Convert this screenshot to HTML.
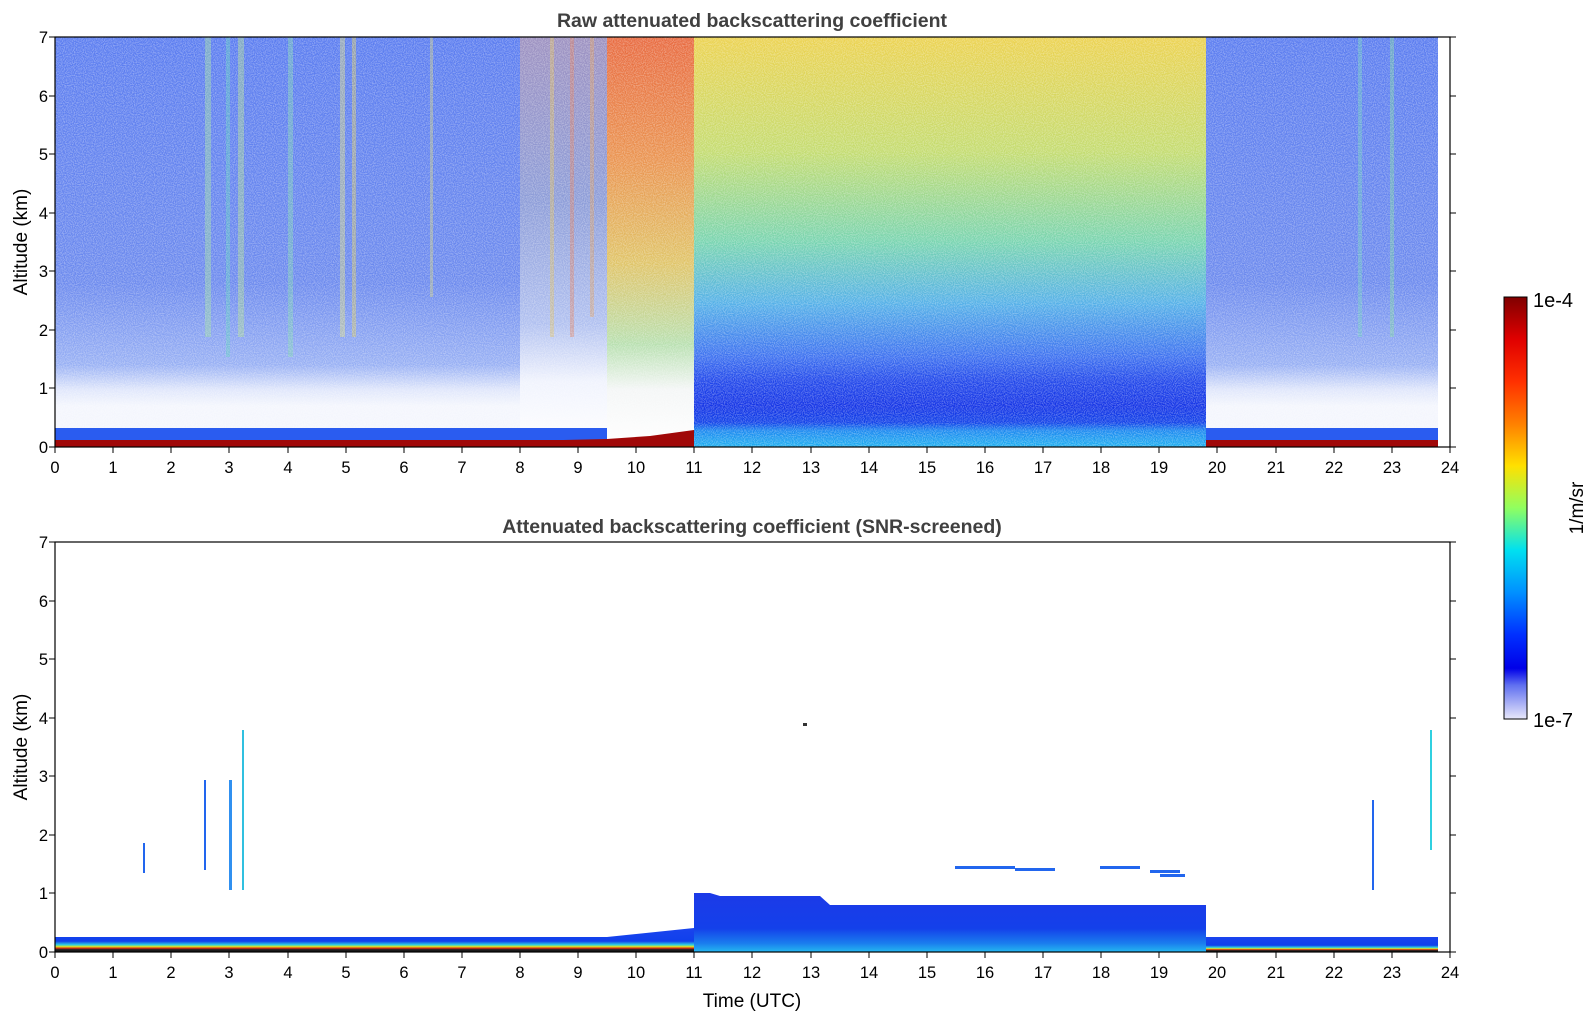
<!DOCTYPE html>
<html><head><meta charset="utf-8"><style>
html,body{margin:0;padding:0;background:#fff;}
svg{display:block;font-family:"Liberation Sans","DejaVu Sans",sans-serif;}
</style></head><body>
<svg width="1595" height="1020" viewBox="0 0 1595 1020" xmlns="http://www.w3.org/2000/svg">
<defs>
<linearGradient id="gA" x1="0" y1="0" x2="0" y2="1">
<stop offset="0" stop-color="#5a7cf0"/><stop offset="0.6" stop-color="#6c8aee"/><stop offset="0.8" stop-color="#98b0f4"/><stop offset="0.86" stop-color="#dfe6fb"/><stop offset="0.9" stop-color="#f4f6fd"/><stop offset="1" stop-color="#f4f6fd"/>
</linearGradient>
<linearGradient id="gA2" x1="0" y1="0" x2="0" y2="1">
<stop offset="0" stop-color="#9c90c0"/><stop offset="0.4" stop-color="#8c9cd8"/><stop offset="0.7" stop-color="#b0c0f0"/><stop offset="0.84" stop-color="#f0f3fd"/><stop offset="1" stop-color="#ffffff"/>
</linearGradient>
<linearGradient id="gB" x1="0" y1="0" x2="0" y2="1">
<stop offset="0" stop-color="#e86a40"/><stop offset="0.3" stop-color="#ea9450"/><stop offset="0.55" stop-color="#e0c468"/><stop offset="0.75" stop-color="#b8e0b0"/><stop offset="0.86" stop-color="#f4f6f6"/><stop offset="1" stop-color="#ffffff"/>
</linearGradient>
<linearGradient id="gC" x1="0" y1="0" x2="0" y2="1">
<stop offset="0" stop-color="#ecd250"/><stop offset="0.28" stop-color="#c4dc70"/><stop offset="0.5" stop-color="#78d4b0"/><stop offset="0.65" stop-color="#54b0e8"/><stop offset="0.78" stop-color="#3c70f0"/><stop offset="0.84" stop-color="#2046ea"/><stop offset="0.9" stop-color="#1434e6"/><stop offset="0.94" stop-color="#1040e8"/><stop offset="0.96" stop-color="#1a88f0"/><stop offset="1" stop-color="#20b0f0"/>
</linearGradient>
<linearGradient id="gBl" x1="0" y1="0" x2="0" y2="1">
<stop offset="0" stop-color="#1a44ee"/><stop offset="0.55" stop-color="#1040ec"/><stop offset="0.7" stop-color="#30d0e0"/><stop offset="0.78" stop-color="#e0e020"/><stop offset="0.84" stop-color="#e03010"/><stop offset="0.9" stop-color="#202020"/><stop offset="1" stop-color="#101010"/>
</linearGradient>
<linearGradient id="gCb" x1="0" y1="0" x2="0" y2="1">
<stop offset="0" stop-color="#1c3ae8"/><stop offset="0.6" stop-color="#1440ea"/><stop offset="0.85" stop-color="#1a7cee"/><stop offset="1" stop-color="#24b8f0"/>
</linearGradient>
<linearGradient id="cb" x1="0" y1="0" x2="0" y2="1">
<stop offset="0" stop-color="#800000"/><stop offset="0.1" stop-color="#e00000"/><stop offset="0.2" stop-color="#ff3000"/><stop offset="0.3" stop-color="#ff8000"/><stop offset="0.4" stop-color="#ffe000"/><stop offset="0.5" stop-color="#90ff60"/><stop offset="0.6" stop-color="#00e0f0"/><stop offset="0.7" stop-color="#0090ff"/><stop offset="0.8" stop-color="#0030ff"/><stop offset="0.88" stop-color="#0000e8"/><stop offset="0.92" stop-color="#6070f0"/><stop offset="1" stop-color="#e8e8fa"/>
</linearGradient>
<filter id="spk" x="0" y="0" width="100%" height="100%">
<feTurbulence type="fractalNoise" baseFrequency="0.9" numOctaves="1" seed="3" result="n"/>
<feColorMatrix type="matrix" values="0 0 0 0 1  0 0 0 0 1  0 0 0 0 1  0 0 0 -3 1.9"/>
</filter>
</defs>

<rect x="55" y="37" width="465" height="410" fill="url(#gA)"/>
<rect x="520" y="37" width="87" height="410" fill="url(#gA2)"/>
<rect x="607" y="37" width="87" height="410" fill="url(#gB)"/>
<rect x="694" y="37" width="512" height="410" fill="url(#gC)"/>
<rect x="1206" y="37" width="232" height="410" fill="url(#gA)"/>
<rect x="1438" y="37" width="12" height="410" fill="#fff"/>
<g opacity="0.45">
<rect x="205" y="37" width="6" height="300" fill="#a0e0a0"/>
<rect x="226" y="37" width="4" height="320" fill="#60d0c0"/>
<rect x="238" y="37" width="6" height="300" fill="#b0e090"/>
<rect x="288" y="37" width="5" height="320" fill="#80d8b0"/>
<rect x="340" y="37" width="5" height="300" fill="#e0e080"/>
<rect x="352" y="37" width="4" height="300" fill="#e0d060"/>
<rect x="430" y="37" width="3" height="260" fill="#d0d080"/>
<rect x="550" y="37" width="4" height="300" fill="#e0c060"/>
<rect x="570" y="37" width="4" height="300" fill="#e08060"/>
<rect x="590" y="37" width="4" height="280" fill="#e0a060"/>
<rect x="1358" y="37" width="4" height="300" fill="#70d0c0"/>
<rect x="1390" y="37" width="4" height="300" fill="#80d8a0"/>
</g>
<rect x="55" y="37" width="1395" height="410" filter="url(#spk)" opacity="0.3"/>
<rect x="55" y="428" width="552" height="12" fill="#2a5cf0"/>
<rect x="55" y="440" width="552" height="7" fill="#a00808"/>
<path d="M520 441 L607 439 L650 436 L694 430 L694 447 L520 447Z" fill="#a00808"/>
<rect x="1206" y="428" width="232" height="12" fill="#2a5cf0"/>
<rect x="1206" y="440" width="232" height="7" fill="#a00808"/>

<path d="M55 937 L607 937 L694 928 L694 952 L55 952Z" fill="url(#gBl)"/>
<rect x="1206" y="937" width="232" height="15" fill="url(#gBl)"/>
<path d="M694 893 L710 893 L720 896 L820 896 L830 905 L1206 905 L1206 952 L694 952Z" fill="url(#gCb)"/>
<g fill="#2266ee">
<rect x="955" y="866" width="60" height="3"/>
<rect x="1015" y="868" width="40" height="3"/>
<rect x="1100" y="866" width="40" height="3"/>
<rect x="1150" y="870" width="30" height="3"/>
<rect x="1160" y="874" width="25" height="3"/>
<rect x="143" y="843" width="2" height="30"/>
<rect x="204" y="780" width="2" height="90"/>
<rect x="229" y="780" width="3" height="110" fill="#3090f0"/>
<rect x="242" y="730" width="2" height="160" fill="#30c0e0"/>
<rect x="1372" y="800" width="2" height="90"/>
<rect x="1430" y="730" width="2" height="120" fill="#30d0e0"/>
</g>
<rect x="803" y="723" width="4" height="3" fill="#333"/>

<rect x="55" y="37" width="1395" height="410" fill="none" stroke="#000" stroke-width="1.2"/>
<rect x="55" y="542" width="1395" height="410" fill="none" stroke="#000" stroke-width="1.2"/>

<g stroke="#000" stroke-width="1">
<path d="M55 447v6M113 447v6M171 447v6M229 447v6M288 447v6M346 447v6M404 447v6M462 447v6M520 447v6M578 447v6M636 447v6M694 447v6M752 447v6M811 447v6M869 447v6M927 447v6M985 447v6M1043 447v6M1101 447v6M1159 447v6M1217 447v6M1276 447v6M1334 447v6M1392 447v6M1450 447v6"/>
<path d="M55 952v6M113 952v6M171 952v6M229 952v6M288 952v6M346 952v6M404 952v6M462 952v6M520 952v6M578 952v6M636 952v6M694 952v6M752 952v6M811 952v6M869 952v6M927 952v6M985 952v6M1043 952v6M1101 952v6M1159 952v6M1217 952v6M1276 952v6M1334 952v6M1392 952v6M1450 952v6"/>
<path d="M49 447h6M49 388h6M49 330h6M49 271h6M49 213h6M49 154h6M49 96h6M49 37h6"/>
<path d="M49 952h6M49 893h6M49 835h6M49 776h6M49 718h6M49 659h6M49 601h6M49 542h6"/>
<path d="M1450 447h6M1450 388h6M1450 330h6M1450 271h6M1450 213h6M1450 154h6M1450 96h6M1450 37h6"/>
<path d="M1450 952h6M1450 893h6M1450 835h6M1450 776h6M1450 718h6M1450 659h6M1450 601h6M1450 542h6"/>
</g>

<g font-size="16.5" fill="#000" text-anchor="middle">
<g transform="translate(0,473)">
<text x="55">0</text><text x="113">1</text><text x="171">2</text><text x="229">3</text><text x="288">4</text><text x="346">5</text><text x="404">6</text><text x="462">7</text><text x="520">8</text><text x="578">9</text><text x="636">10</text><text x="694">11</text><text x="752">12</text><text x="811">13</text><text x="869">14</text><text x="927">15</text><text x="985">16</text><text x="1043">17</text><text x="1101">18</text><text x="1159">19</text><text x="1217">20</text><text x="1276">21</text><text x="1334">22</text><text x="1392">23</text><text x="1450">24</text>
</g>
<g transform="translate(0,978)">
<text x="55">0</text><text x="113">1</text><text x="171">2</text><text x="229">3</text><text x="288">4</text><text x="346">5</text><text x="404">6</text><text x="462">7</text><text x="520">8</text><text x="578">9</text><text x="636">10</text><text x="694">11</text><text x="752">12</text><text x="811">13</text><text x="869">14</text><text x="927">15</text><text x="985">16</text><text x="1043">17</text><text x="1101">18</text><text x="1159">19</text><text x="1217">20</text><text x="1276">21</text><text x="1334">22</text><text x="1392">23</text><text x="1450">24</text>
</g>
</g>
<g font-size="16.5" fill="#000" text-anchor="end">
<text x="48" y="453">0</text><text x="48" y="394">1</text><text x="48" y="336">2</text><text x="48" y="277">3</text><text x="48" y="219">4</text><text x="48" y="160">5</text><text x="48" y="102">6</text><text x="48" y="43">7</text>
<text x="48" y="958">0</text><text x="48" y="899">1</text><text x="48" y="841">2</text><text x="48" y="782">3</text><text x="48" y="724">4</text><text x="48" y="665">5</text><text x="48" y="607">6</text><text x="48" y="548">7</text>
</g>

<g font-size="19.5" font-weight="bold" fill="#404040" text-anchor="middle">
<text x="752" y="27">Raw attenuated backscattering coefficient</text>
<text x="752" y="533">Attenuated backscattering coefficient (SNR-screened)</text>
</g>
<g font-size="19" fill="#000" text-anchor="middle">
<text transform="translate(27,242) rotate(-90)">Altitude (km)</text>
<text transform="translate(27,747) rotate(-90)">Altitude (km)</text>
<text x="752" y="1007">Time (UTC)</text>
<text transform="translate(1583,508) rotate(-90)">1/m/sr</text>
</g>

<rect x="1504" y="297" width="23" height="422" fill="url(#cb)" stroke="#000" stroke-width="1"/>
<g font-size="20" fill="#000">
<text x="1533" y="307">1e-4</text>
<text x="1533" y="727">1e-7</text>
</g>
</svg>
</body></html>
